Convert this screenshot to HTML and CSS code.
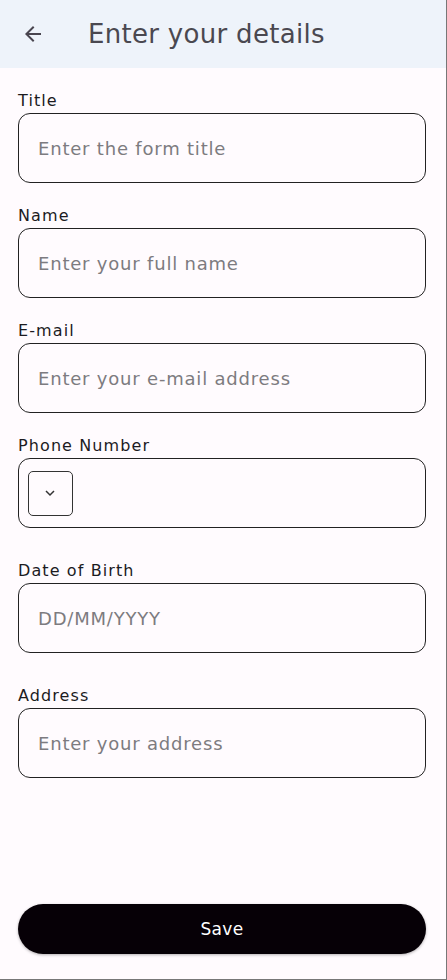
FILE: index.html
```html
<!DOCTYPE html>
<html lang="en">
<head>
<meta charset="utf-8">
<title>Enter your details</title>
<link rel="stylesheet" href="styles.css">
</head>
<body>
<div class="page">
  <header class="appbar">
    <button class="back" aria-label="Back">
      <svg width="24" height="24" viewBox="0 0 24 24"><path d="M20 11H7.83l5.59-5.59L12 4l-8 8 8 8 1.41-1.41L7.83 13H20v-2z" fill="#49454f"/></svg>
    </button>
    <h1 class="title">Enter your details</h1>
  </header>
  <form class="form">
    <div class="field">
      <label class="label">Title</label>
      <input class="input" placeholder="Enter the form title">
    </div>
    <div class="field">
      <label class="label">Name</label>
      <input class="input" placeholder="Enter your full name">
    </div>
    <div class="field">
      <label class="label">E-mail</label>
      <input class="input" placeholder="Enter your e-mail address">
    </div>
    <div class="field">
      <label class="label">Phone Number</label>
      <div class="input phone">
        <div class="code">
          <svg width="12" height="8" viewBox="0 0 12 8"><path d="M2 2l4 4 4-4" fill="none" stroke="#333" stroke-width="1.5"/></svg>
        </div>
      </div>
    </div>
    <div class="field field-spaced">
      <label class="label">Date of Birth</label>
      <input class="input" placeholder="DD/MM/YYYY">
    </div>
    <div class="field field-spaced">
      <label class="label">Address</label>
      <input class="input" placeholder="Enter your address">
    </div>
    <button type="button" class="save">Save</button>
  </form>
</div>
</body>
</html>
```
FILE: styles.css
```css
* { box-sizing: border-box; }
html, body { margin: 0; padding: 0; }
body {
  background: #fffbfe;
  font-family: "DejaVu Sans", "Noto Sans", sans-serif;
}
.page {
  width: 447px;
  height: 980px;
  border-right: 1px solid #777;
  border-bottom: 1px solid #777;
  display: flex;
  flex-direction: column;
  background: #fffbfe;
}
.appbar {
  height: 68px;
  background: #eef3fa;
  display: flex;
  align-items: center;
  padding-left: 21px;
  flex-shrink: 0;
}
.back {
  width: 24px;
  height: 24px;
  padding: 0;
  border: 0;
  background: none;
  display: flex;
}
.title {
  margin: 0 0 0 43px;
  font-size: 26px;
  font-weight: 400;
  color: #4a4850;
  letter-spacing: 0.3px;
}
.form {
  flex: 1;
  display: flex;
  flex-direction: column;
  padding: 21px 20px 25px 18px;
  gap: 21px;
}
.field {
  display: flex;
  flex-direction: column;
}
.field-spaced { margin-top: 10px; }
.label {
  font-size: 16px;
  line-height: 24px;
  color: #1c1b1f;
  letter-spacing: 1.1px;
}
.input {
  height: 70px;
  border: 1.5px solid #222;
  border-radius: 12px;
  background: transparent;
  padding: 0 0 0 19px;
  font-family: inherit;
  font-size: 18px;
  letter-spacing: 0.8px;
  color: #1c1b1f;
  outline: none;
}
.input::placeholder { color: #7d7b80; }
.phone {
  display: flex;
  align-items: center;
  padding-left: 8.5px;
}
.code {
  width: 45px;
  height: 45px;
  border: 1.2px solid #333;
  border-radius: 5px;
  display: flex;
  align-items: center;
  justify-content: center;
}
.save {
  margin-top: auto;
  height: 50px;
  border: 0;
  border-radius: 25px;
  background: #060006;
  color: #fff;
  font-family: inherit;
  font-size: 17px;
  letter-spacing: 0.3px;
  box-shadow: 0 1px 3px rgba(0,0,0,0.3);
}
```
